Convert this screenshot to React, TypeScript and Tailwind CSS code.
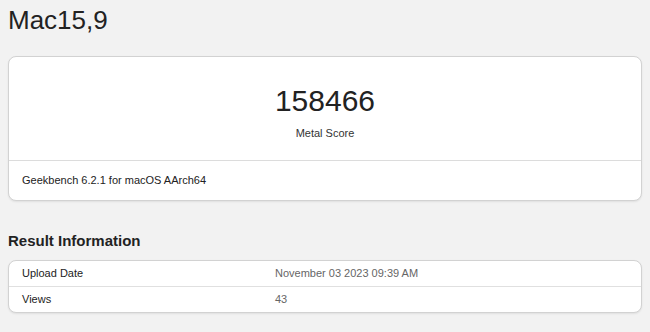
export default function App() {
  const info = [
    { label: "Upload Date", value: "November 03 2023 09:39 AM" },
    { label: "Views", value: "43" },
  ];

  return (
    <div className="min-h-screen bg-[#f2f2f2] px-2 font-['Liberation_Sans',Arial,sans-serif] text-[#333]">
      {/* Title */}
      <h1 className="pt-[6px] text-[26px] leading-[29px] text-[#222]">Mac15,9</h1>

      {/* Score card */}
      <div className="mt-[21px] rounded-lg border border-[#d2d2d2] bg-white shadow-[0_1px_2px_rgba(0,0,0,0.08)]">
        <div className="flex flex-col items-center pt-[29px] pb-[20px]">
          <div className="text-[30px] leading-[30px] text-[#222]">158466</div>
          <div className="mt-[11px] text-[11px] leading-[13px] text-[#333]">Metal Score</div>
        </div>
        <div className="border-t border-[#dcdcdc] px-[13px] py-[13px] text-[11px] leading-[13px] text-[#222]">
          Geekbench 6.2.1 for macOS AArch64
        </div>
      </div>

      {/* Result information */}
      <h2 className="mt-[31px] text-[15px] font-bold leading-[17px] text-[#222]">Result Information</h2>
      <div className="mt-[11px] rounded-lg border border-[#d2d2d2] bg-white shadow-[0_1px_2px_rgba(0,0,0,0.08)]">
        {info.map((row, i) => (
          <div
            key={row.label}
            className={`grid grid-cols-[253px_1fr] px-[13px] py-[6px] text-[11px] leading-[13px] ${
              i > 0 ? "border-t border-[#e0e0e0]" : ""
            }`}
          >
            <span className="text-[#222]">{row.label}</span>
            <span className="text-[#666]">{row.value}</span>
          </div>
        ))}
      </div>
    </div>
  );
}
